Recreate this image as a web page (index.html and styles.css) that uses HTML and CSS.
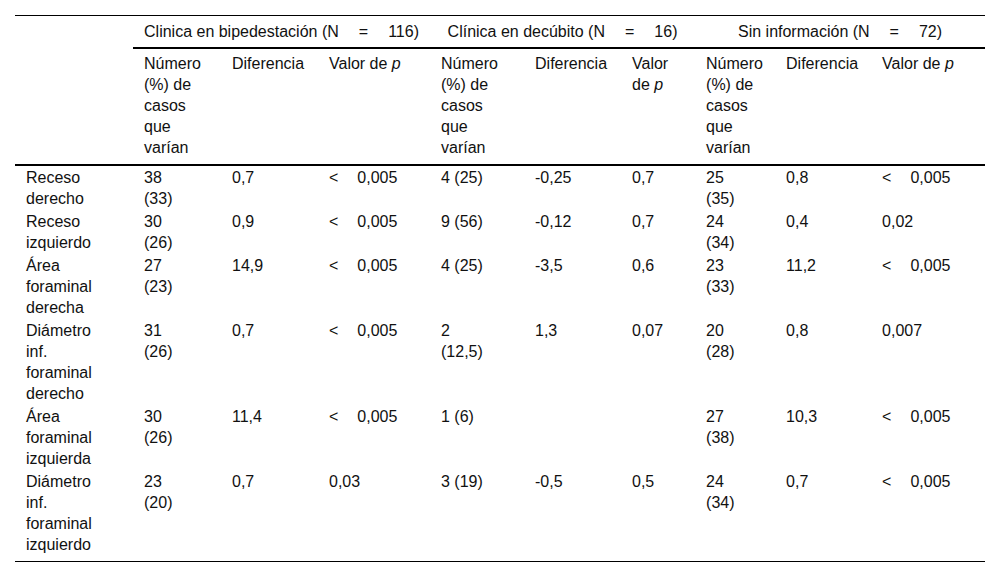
FILE: index.html
```html
<!DOCTYPE html>
<html lang="es">
<head>
<meta charset="utf-8">
<title>Tabla</title>
<link rel="stylesheet" href="styles.css">
</head>
<body>
<div class="wrap">
<table class="data">
<colgroup>
<col style="width:118px"><col style="width:88px"><col style="width:97px"><col style="width:112px"><col style="width:94px"><col style="width:97px"><col style="width:74px"><col style="width:80px"><col style="width:96px"><col style="width:114px">
</colgroup>
<thead>
<tr class="groups">
<th class="corner" rowspan="2"></th>
<th class="grp" colspan="3">Clinica en bipedestación (N<span class="eq">=</span>116)</th>
<th class="grp" colspan="3">Clínica en decúbito (N<span class="eq">=</span>16)</th>
<th class="grp" colspan="3">Sin información (N<span class="eq">=</span>72)</th>
</tr>
<tr class="subs">
<th>Número (%) de casos que varían</th>
<th>Diferencia</th>
<th>Valor de <i>p</i></th>
<th>Número (%) de casos que varían</th>
<th>Diferencia</th>
<th>Valor de <i>p</i></th>
<th>Número (%) de casos que varían</th>
<th>Diferencia</th>
<th>Valor de <i>p</i></th>
</tr>
</thead>
<tbody>
<tr>
<td>Receso derecho</td><td>38 (33)</td><td>0,7</td><td><span class="lt">&lt;</span>0,005</td>
<td>4 (25)</td><td>-0,25</td><td>0,7</td>
<td>25 (35)</td><td>0,8</td><td><span class="lt">&lt;</span>0,005</td>
</tr>
<tr>
<td>Receso izquierdo</td><td>30 (26)</td><td>0,9</td><td><span class="lt">&lt;</span>0,005</td>
<td>9 (56)</td><td>-0,12</td><td>0,7</td>
<td>24 (34)</td><td>0,4</td><td>0,02</td>
</tr>
<tr>
<td>Área foraminal derecha</td><td>27 (23)</td><td>14,9</td><td><span class="lt">&lt;</span>0,005</td>
<td>4 (25)</td><td>-3,5</td><td>0,6</td>
<td>23 (33)</td><td>11,2</td><td><span class="lt">&lt;</span>0,005</td>
</tr>
<tr>
<td>Diámetro inf. foraminal derecho</td><td>31 (26)</td><td>0,7</td><td><span class="lt">&lt;</span>0,005</td>
<td>2 (12,5)</td><td>1,3</td><td>0,07</td>
<td>20 (28)</td><td>0,8</td><td>0,007</td>
</tr>
<tr>
<td>Área foraminal izquierda</td><td>30 (26)</td><td>11,4</td><td><span class="lt">&lt;</span>0,005</td>
<td>1 (6)</td><td></td><td></td>
<td>27 (38)</td><td>10,3</td><td><span class="lt">&lt;</span>0,005</td>
</tr>
<tr>
<td>Diámetro inf. foraminal izquierdo</td><td>23 (20)</td><td>0,7</td><td>0,03</td>
<td>3 (19)</td><td>-0,5</td><td>0,5</td>
<td>24 (34)</td><td>0,7</td><td><span class="lt">&lt;</span>0,005</td>
</tr>
</tbody>
</table>
</div>
</body>
</html>
```
FILE: styles.css
```css
html, body {
  margin: 0;
  padding: 0;
  background: #ffffff;
}
.wrap {
  padding: 15px;
}
.data {
  width: 970px;
  table-layout: fixed;
  border-collapse: separate;
  border-spacing: 0;
  border-top: 1px solid #000;
  border-bottom: 1px solid #000;
  font-family: "Liberation Sans", Arial, sans-serif;
  font-size: 16px;
  line-height: 21px;
  color: #111;
}
.data th, .data td {
  font-weight: normal;
  text-align: left;
  vertical-align: top;
  padding: 1px 11px;
}
.groups th {
  padding-top: 5px;
  padding-bottom: 5px;
}
.groups .grp {
  text-align: center;
  border-bottom: 2px solid #000;
}
.groups .corner {
  border-bottom: 2px solid #000;
}
.subs th {
  padding-top: 4px;
  padding-bottom: 6px;
  border-bottom: 2px solid #000;
}
.subs th:nth-child(1) { padding-right: 28px; }
.subs th:nth-child(4) { padding-right: 34px; }
.subs th:nth-child(7) { padding-right: 20px; }
tbody td:nth-child(1) { padding-right: 30px; }
tbody td:nth-child(2) { padding-right: 28px; }
tbody td:nth-child(5) { padding-right: 34px; }
tbody td:nth-child(8) { padding-right: 20px; }
tbody tr:last-child td {
  padding-bottom: 6px;
}
.eq {
  display: inline-block;
  margin: 0 20px;
}
.lt {
  display: inline-block;
  margin-right: 19px;
}
```
